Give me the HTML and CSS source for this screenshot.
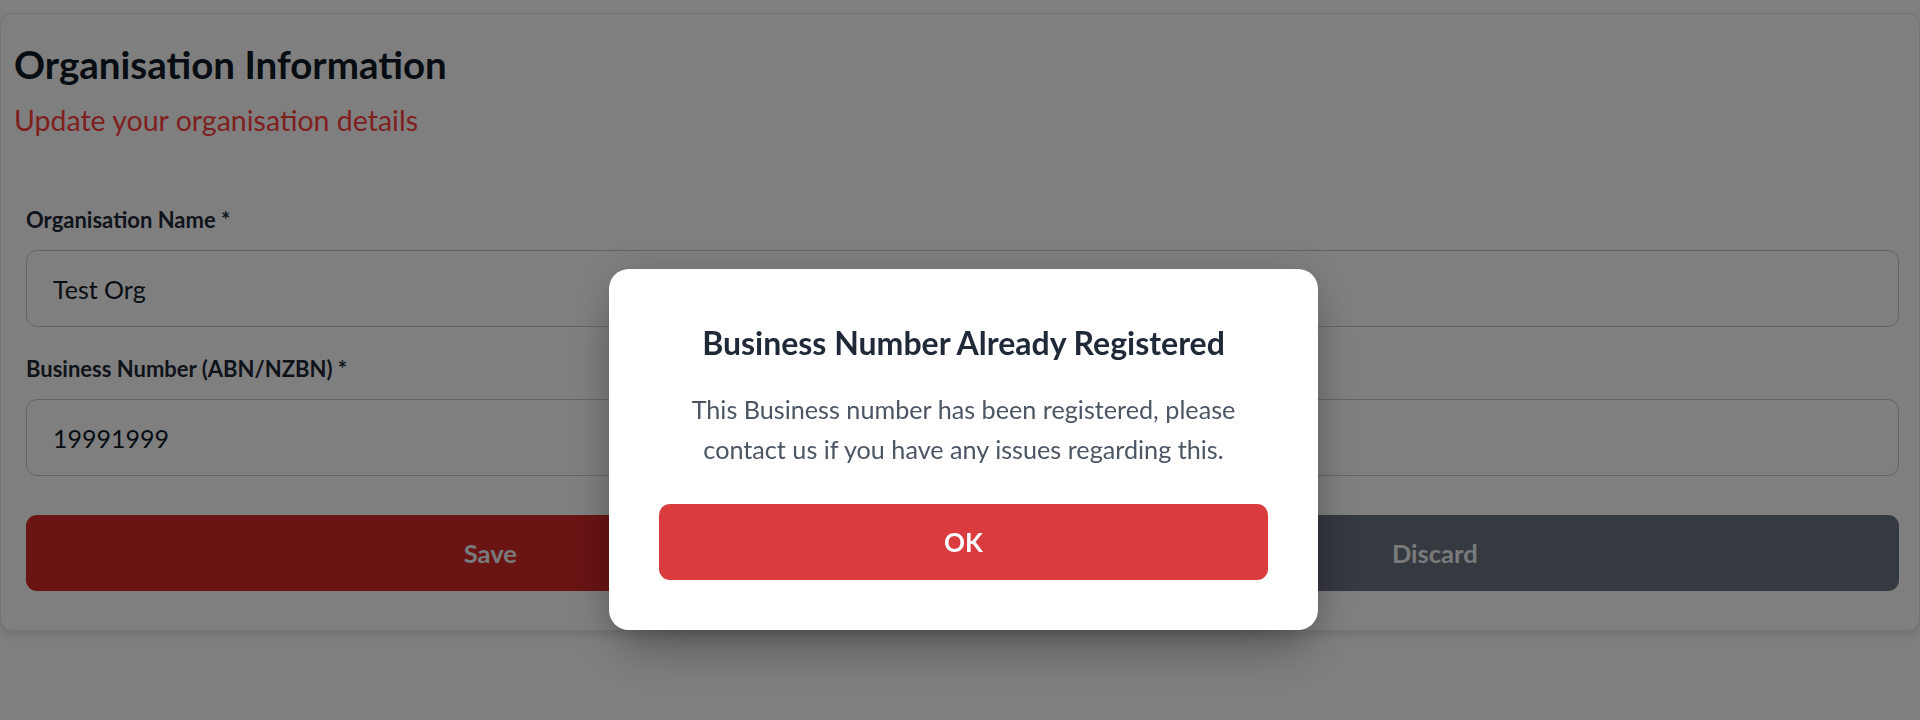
FILE: index.html
```html
<!DOCTYPE html>
<html lang="en">
<head>
<meta charset="utf-8">
<title>Organisation Information</title>
<link rel="stylesheet" href="styles.css">
</head>
<body>
  <main class="page">
    <section class="card">
      <header class="card-header">
        <h1 class="card-title">Organisation Information</h1>
        <p class="card-subtitle">Update your organisation details</p>
      </header>
      <form class="org-form">
        <div class="field">
          <label class="field-label" for="org-name">Organisation Name *</label>
          <input class="field-input" id="org-name" type="text" value="Test Org">
        </div>
        <div class="field">
          <label class="field-label" for="org-abn">Business Number (ABN/NZBN) *</label>
          <input class="field-input" id="org-abn" type="text" value="19991999">
        </div>
        <div class="form-actions">
          <button type="button" class="btn btn-save">Save</button>
          <button type="button" class="btn btn-discard">Discard</button>
        </div>
      </form>
    </section>
  </main>

  <div class="backdrop">
    <div class="dialog" role="alertdialog" aria-labelledby="dialog-title">
      <h2 class="dialog-title" id="dialog-title">Business Number Already Registered</h2>
      <p class="dialog-text">This Business number has been registered, please contact us if you have any issues regarding this.</p>
      <button type="button" class="dialog-btn">OK</button>
    </div>
  </div>
</body>
</html>
```

FILE: styles.css
```css
* {
  box-sizing: border-box;
}

html,
body {
  margin: 0;
  height: 100%;
  background: #ffffff;
  font-family: "Lato", "Noto Sans", sans-serif;
  overflow: hidden;
}

.page {
  padding-top: 13px;
}

/* Settings card */
.card {
  background: #ffffff;
  border: 1px solid #e5e7eb;
  border-radius: 12px;
  box-shadow: 0 4px 10px rgba(0, 0, 0, 0.12);
  padding: 24px 0 39px;
}

.card-header {
  padding: 0 13px;
}

.card-title {
  margin: 0;
  font-size: 38.5px;
  line-height: 52px;
  font-weight: 700;
  color: #111827;
}

.card-subtitle {
  margin: 12px 0 0;
  font-size: 28.5px;
  line-height: 36px;
  color: #ff4040;
}

.org-form {
  padding: 67px 20px 0 25px;
}

.field {
  display: flex;
  flex-direction: column;
  margin-bottom: 27px;
}

.field-label {
  font-size: 22px;
  line-height: 30px;
  font-weight: 700;
  color: #1f2937;
  margin-bottom: 15px;
}

.field-input {
  height: 77px;
  border: 1px solid #c4c8ce;
  border-radius: 11px;
  padding: 0 26px;
  font-family: inherit;
  font-size: 25px;
  color: #111827;
  background: #ffffff;
}

.form-actions {
  display: grid;
  grid-template-columns: 1fr 1fr;
  gap: 16px;
  padding-top: 12px;
}

.btn {
  height: 76px;
  border: none;
  border-radius: 11px;
  font-family: inherit;
  font-size: 25.5px;
  font-weight: 700;
  color: #f3f4f6;
}

.btn-save {
  background: #d42828;
}

.btn-discard {
  background: #6b7280;
}

/* Modal */
.backdrop {
  position: fixed;
  inset: 0;
  background: rgba(0, 0, 0, 0.5);
  display: flex;
  justify-content: center;
  align-items: flex-start;
  padding-top: 269px;
  padding-left: 7px;
}

.dialog {
  width: 709px;
  background: #ffffff;
  border-radius: 20px;
  padding: 56px 50px 50px;
  text-align: center;
  box-shadow: 0 25px 50px -12px rgba(0, 0, 0, 0.35), 0 0 40px rgba(0, 0, 0, 0.12);
}

.dialog-title {
  margin: 0;
  font-size: 32px;
  line-height: 36px;
  font-weight: 700;
  color: #1f2937;
}

.dialog-text {
  margin: 28px 0 0;
  font-size: 25.2px;
  line-height: 40px;
  color: #4b5563;
}

.dialog-btn {
  display: block;
  width: 100%;
  height: 76px;
  margin-top: 35px;
  border: none;
  border-radius: 11px;
  background: #d93b3f;
  color: #ffffff;
  font-family: inherit;
  font-size: 26px;
  font-weight: 700;
}
```
